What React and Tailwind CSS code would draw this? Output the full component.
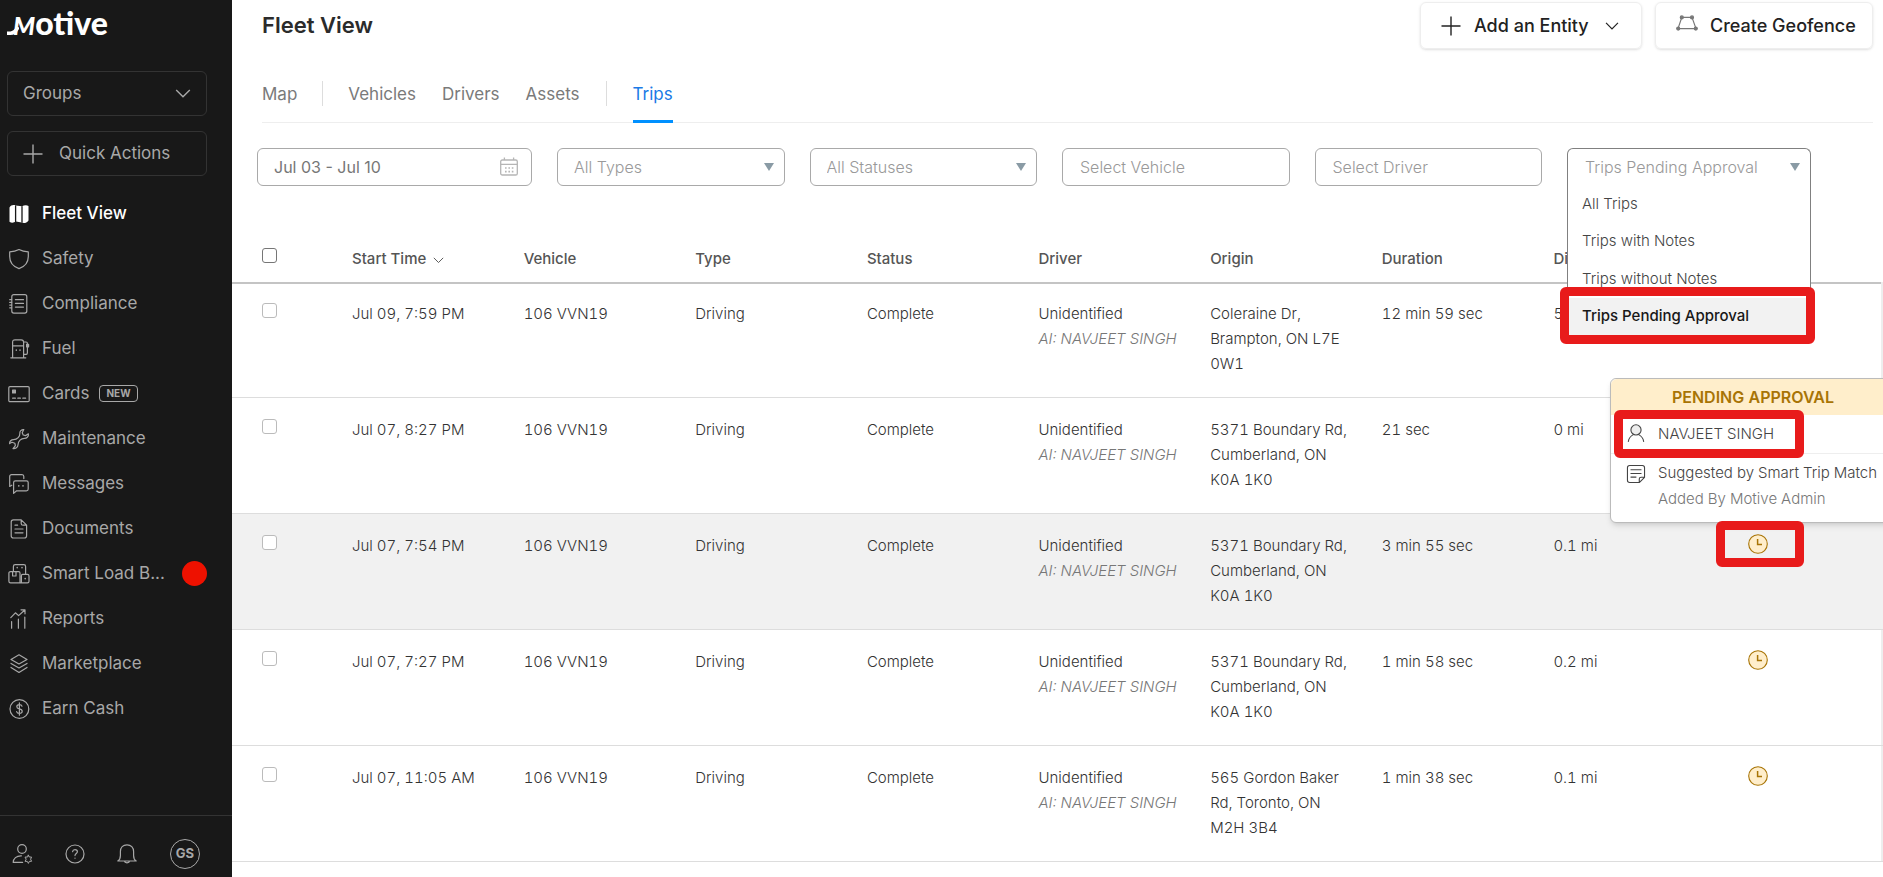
import React from 'react';
import clsx from 'clsx';

const Icon = ({ size = 22, children, className }) => (
  <svg
    width={size}
    height={size}
    viewBox="0 0 22 22"
    fill="none"
    stroke="currentColor"
    strokeWidth="1.2"
    strokeLinecap="round"
    strokeLinejoin="round"
    aria-hidden="true"
    className={clsx('shrink-0', className)}
  >
    {children}
  </svg>
);

const MapIcon = () => (
  <Icon>
    <path d="M1.5 4.5C3 2.2 5 1.6 7.6 2.4L14 3.2C16 2.2 18.6 1.6 20.5 3V17.5C18.6 20 16 20.6 13.6 19.6L8 18.6C5.6 20 3.4 20.2 1.5 18.8Z" fill="currentColor" stroke="none" />
    <path d="M7.6 3V18.4M14 3.6V19.2" stroke="#181818" strokeWidth="1.3" />
  </Icon>
);

const ShieldIcon = () => (
  <Icon>
    <path d="M11 1.6C13.8 3.2 17 3.8 20.3 3.8V8.5C20.3 14.5 16.8 18.6 11 20.6C5.2 18.6 1.7 14.5 1.7 8.5V3.8C5 3.8 8.2 3.2 11 1.6Z" />
  </Icon>
);

const ComplianceIcon = () => (
  <Icon>
    <rect x="3.8" y="1.7" width="15" height="18.4" rx="2" />
    <path d="M7.4 6.7H15.5M7.4 10.4H15.5M7.4 14.1H15.5M1.7 6.7H3.6M1.7 9.4H3.6M1.7 12.1H3.6M1.7 14.8H3.6" />
  </Icon>
);

const FuelIcon = () => (
  <Icon>
    <path d="M4.6 19.8V4.2C4.6 2.6 5.4 1.8 7 1.8H13.2C14.8 1.8 15.6 2.6 15.6 4.2V19.8M2.8 19.8H17.8M4.6 7.8H15.6" />
    <path d="M15.6 16.4H18.2C19.2 16.4 19.4 15.6 19.4 14.8V9.4M15.8 4H18C19 4 19.4 4.6 19.4 5.6V9.2" />
    <path d="M18.6 6.4H20.6V8.8H18.6Z" fill="currentColor" />
    <path d="M8.3 12V12.2M12 12V12.2" strokeWidth="1.5" />
  </Icon>
);

const CardsIcon = () => (
  <Icon>
    <rect x="0.8" y="3.6" width="20.4" height="15" rx="1.2" />
    <rect x="4.6" y="7.2" width="2.8" height="2.8" fill="currentColor" />
    <path d="M4.6 15.2H7.4M9.8 15.2H12.4M14.8 15.2H17.6" />
  </Icon>
);

const WrenchIcon = () => (
  <Icon>
    <path d="M15.8 1.6C13.4 1.4 11.6 3.2 11.8 5.6C12 7.6 11.4 8.4 10.2 9.6C8.8 11 7.6 11.6 5.6 11.6C3.2 11.6 1.4 13.4 1.6 15.6L4 14.2L6.8 15.2L7.4 17.6L5 20.6C7.4 21 10 19.4 10 16.8C10 14.6 10.6 13.6 12 12.2C13.4 10.8 14.4 10.4 16.4 10.4C18.8 10.4 20.8 8.4 20.4 5.8L17.8 7.6L15.2 7L14.2 4.8Z" />
  </Icon>
);

const MessagesIcon = () => (
  <Icon>
    <path d="M1.7 13.4V3.6C1.7 2.4 2.4 1.7 3.6 1.7H14C15.2 1.7 15.8 2.4 15.8 3.6V5.6M1.7 13.4L3.8 12.2" />
    <path d="M5.6 20.4V9.6C5.6 8.4 6.2 7.8 7.4 7.8H18.4C19.6 7.8 20.2 8.4 20.2 9.6V16C20.2 17.2 19.6 17.8 18.4 17.8H8.6Z" />
    <path d="M10.8 12.8V13M15 12.8V13" strokeWidth="1.6" />
  </Icon>
);

const DocumentIcon = () => (
  <Icon>
    <path d="M13.2 1.8H5.4C4 1.8 3.2 2.6 3.2 4V17.8C3.2 19.2 4 20 5.4 20H16.4C17.8 20 18.6 19.2 18.6 17.8V7.2ZM13.2 1.8V5.4C13.2 6.6 13.8 7.2 15 7.2H18.6" />
    <path d="M7 7.2H9.6M7 11H15M7 14.8H15" />
  </Icon>
);

const LoadIcon = () => (
  <Icon>
    <path d="M5.4 8.6V3.4C5.4 2.2 6 1.6 7.2 1.6H15.8C17 1.6 17.6 2.2 17.6 3.4V11.4M12 19.8V10C12 9 11.4 8.6 10.6 8.6H2.6C1.6 8.6 0.9 9 0.9 10V18.2C0.9 19.2 1.6 19.8 2.6 19.8H19.4C20.4 19.8 21 19.2 21 18.2V13C21 12 20.4 11.4 19.4 11.4H14.6C13.8 11.4 13.4 12 13.4 13V19.8M4.6 8.6V13H8V8.6" />
    <path d="M9.2 4.6V4.8M14 4.6V4.8M17.2 15.6V15.8" strokeWidth="1.5" />
  </Icon>
);

const ReportsIcon = () => (
  <Icon>
    <path d="M3.6 13.6V20.2M10.4 11.2V20.2M16.8 9V20.2M2.8 9.6L7.4 4.8L10.6 7.6L16.8 2M13 1.8H17V5.8" />
  </Icon>
);

const LayersIcon = () => (
  <Icon>
    <path d="M11 1.8L19 6.4L11 11L3 6.4ZM3 10.4L11 15L19 10.4M3 14.4L11 19.4L19 14.4" />
  </Icon>
);

const CashIcon = () => (
  <Icon>
    <circle cx="11.4" cy="11" r="9.4" />
    <path d="M14 8.2C13.6 7 12.6 6.6 11.4 6.6C9.8 6.6 8.8 7.4 8.8 8.7C8.8 10.1 9.8 10.5 11.4 10.9C13.2 11.3 14.2 11.9 14.2 13.3C14.2 14.7 13 15.4 11.4 15.4C10 15.4 8.9 14.8 8.6 13.6M11.4 4.8V17.2" />
  </Icon>
);

const ChevronDown = ({ width = 16, className }) => (
  <svg width={width} height={width / 2 + 1} viewBox="0 0 16 9" fill="none" stroke="currentColor" strokeWidth="1.4" aria-hidden="true" className={className}>
    <path d="M1.2 1L8 7.8L14.8 1" />
  </svg>
);

const PlusIcon = () => (
  <svg width="20" height="20" viewBox="0 0 20 20" stroke="currentColor" strokeWidth="1.4" aria-hidden="true">
    <path d="M10 0.5V19.5M0.5 10H19.5" />
  </svg>
);

const Triangle = () => (
  <svg width="10" height="8" viewBox="0 0 10 8" aria-hidden="true" className="pointer-events-none absolute right-[11px] top-[15px]">
    <path d="M0 0H10L5 8Z" fill="#8a9ba5" />
  </svg>
);

const ClockIcon = () => (
  <svg width="20" height="20" viewBox="0 0 20 20" aria-hidden="true">
    <circle cx="10" cy="10" r="9.3" fill="#ffeecb" stroke="#a87405" strokeWidth="1.1" />
    <path d="M9.6 5V10.4H14" fill="none" stroke="#a87405" strokeWidth="1.5" />
  </svg>
);

const navItems = [
  { label: 'Fleet View', icon: MapIcon, active: true },
  { label: 'Safety', icon: ShieldIcon },
  { label: 'Compliance', icon: ComplianceIcon },
  { label: 'Fuel', icon: FuelIcon },
  { label: 'Cards', icon: CardsIcon, tag: 'NEW' },
  { label: 'Maintenance', icon: WrenchIcon },
  { label: 'Messages', icon: MessagesIcon },
  { label: 'Documents', icon: DocumentIcon },
  { label: 'Smart Load B...', icon: LoadIcon, dot: true },
  { label: 'Reports', icon: ReportsIcon },
  { label: 'Marketplace', icon: LayersIcon },
  { label: 'Earn Cash', icon: CashIcon },
];

const trips = [
  { start: 'Jul 09, 7:59 PM', origin: ['Coleraine Dr,', 'Brampton, ON L7E', '0W1'], duration: '12 min 59 sec', distance: '5' },
  { start: 'Jul 07, 8:27 PM', origin: ['5371 Boundary Rd,', 'Cumberland, ON', 'K0A 1K0'], duration: '21 sec', distance: '0 mi' },
  { start: 'Jul 07, 7:54 PM', origin: ['5371 Boundary Rd,', 'Cumberland, ON', 'K0A 1K0'], duration: '3 min 55 sec', distance: '0.1 mi', pending: true, open: true },
  { start: 'Jul 07, 7:27 PM', origin: ['5371 Boundary Rd,', 'Cumberland, ON', 'K0A 1K0'], duration: '1 min 58 sec', distance: '0.2 mi', pending: true },
  { start: 'Jul 07, 11:05 AM', origin: ['565 Gordon Baker', 'Rd, Toronto, ON', 'M2H 3B4'], duration: '1 min 38 sec', distance: '0.1 mi', pending: true },
];

const Sidebar = () => (
  <aside className="w-[232px] shrink-0 bg-[#181818] text-[#a8a8a8] flex flex-col">
    <div className="flex items-baseline pt-[3px] pl-[7px] h-[71px] font-[Lato] font-black text-white">
      <svg width="12" height="8" viewBox="0 0 12 8" aria-hidden="true" className="-mr-[6px]">
        <path d="M0 6.2H3.4C6.6 6.2 8.6 4.6 11 0" fill="none" stroke="#fff" strokeWidth="3.6" />
      </svg>
      <span className="text-[25px] leading-[40px] italic">M</span>
      <span className="text-[32px] leading-[40px]">otive</span>
    </div>

    <div className="pl-[7px] pr-[25px] space-y-[15px]">
      <button type="button" className="w-full h-[45px] px-[15px] flex items-center justify-between border border-[#333] rounded-md text-[17px]">
        Groups
        <ChevronDown />
      </button>
      <button type="button" className="w-full h-[45px] px-[15px] flex items-center gap-4 border border-[#333] rounded-md text-[17px]">
        <PlusIcon />
        Quick Actions
      </button>
    </div>

    <nav className="flex-1 pt-[15px] pl-2 pr-[25px]">
      {navItems.map(({ label, icon: NavIcon, active, tag, dot }) => (
        <a key={label} href="#" className={clsx('h-[45px] flex items-center text-[17px]', active && 'text-white font-medium')}>
          <NavIcon />
          <span className="ml-3">{label}</span>
          {tag && <span className="ml-[10px] px-[6px] border border-[#a8a8a8] rounded-sm text-[10px] leading-[15px] font-bold">{tag}</span>}
          {dot && <span className="ml-auto size-[25px] rounded-full bg-[#ee1100]"></span>}
        </a>
      ))}
    </nav>

    <div className="h-[62px] pt-[14px] px-3 flex items-center gap-[30px] border-t border-[#333]">
      <button type="button" aria-label="Admin">
        <Icon>
          <circle cx="10" cy="6" r="4.3" />
          <path d="M10.6 19.4H1.2C1.2 15.6 4.4 12.6 9.4 12.8" />
          <path d="M16.4 12.2L17.3 14L19.6 14.1L18.6 16.2L19.6 18.3L17.3 18.4L16.4 20.4L15.3 18.4L13 18.3L14.2 16.2L13 14.1L15.3 14Z" strokeWidth="1" />
        </Icon>
      </button>
      <button type="button" aria-label="Help">
        <Icon>
          <circle cx="11" cy="11" r="9" />
          <path d="M8.6 8.6C8.8 7.2 9.8 6.6 11 6.6C12.4 6.6 13.4 7.4 13.4 8.7C13.4 10.4 11 10.6 11 12.6M11 15V15.2" />
        </Icon>
      </button>
      <button type="button" aria-label="Notifications">
        <Icon>
          <path d="M1.8 18H20.2C18 16.6 17.6 15 17.6 12.4V8.6C17.6 4.6 15 1.8 11 1.8C7 1.8 4.4 4.6 4.4 8.6V12.4C4.4 15 4 16.6 1.8 18ZM8.4 18.2C8.8 20.4 13.2 20.4 13.6 18.2" />
        </Icon>
      </button>
      <button type="button" className="ml-[2px] size-[30px] rounded-full border border-[#a8a8a8] text-[13px] font-bold">GS</button>
    </div>
  </aside>
);

const FilterSelect = ({ label }) => (
  <div className="relative flex-1 min-w-0">
    <select aria-label={label} className="w-full h-[38px] pl-4 appearance-none border border-[#a9a9a9] rounded-md bg-white text-base font-light text-[#999]">
      <option>{label}</option>
    </select>
    <Triangle />
  </div>
);

const FilterInput = ({ label }) => (
  <div className="flex-1 min-w-0">
    <input
      type="text"
      aria-label={label}
      placeholder={label}
      className="w-full h-[38px] px-[17px] border border-[#a9a9a9] rounded-md text-base font-light placeholder:text-[#999]"
    />
  </div>
);

const NotesFilter = () => (
  <div className="relative z-20 w-[244px] shrink-0">
    <select aria-label="Notes" className="w-full h-[38px] pl-[17px] pb-px appearance-none border border-b-0 border-[#808080] rounded-t-md bg-white text-base font-light text-[#999]">
      <option>Trips Pending Approval</option>
    </select>
    <Triangle />
    <ul className="absolute top-[37px] left-0 w-full border border-t-0 border-[#808080] bg-white text-[15px] font-light text-[#444]">
      <li className="h-[38px] px-[14px] flex items-center">All Trips</li>
      <li className="h-[37px] px-[14px] flex items-center">Trips with Notes</li>
      <li className="h-[38px] px-[14px] flex items-center">Trips without Notes</li>
      <li className="h-[37px] px-[14px] flex items-center bg-[#f2f2f2] text-[#181818] font-medium">Trips Pending Approval</li>
    </ul>
    <span className="pointer-events-none absolute -left-[7px] top-[139px] w-[255px] h-[57px] border-[9px] border-[#e81b1b] rounded-md"></span>
  </div>
);

const PendingCard = () => (
  <div role="tooltip" className="absolute z-10 left-[-138px] bottom-[31px] w-[286px] bg-white border border-[#bbb] rounded-md shadow-md text-[15px] text-[#444]">
    <div className="h-9 flex items-center justify-center bg-[#ffeecb] rounded-t-md text-[#a87405] text-base font-semibold">PENDING APPROVAL</div>
    <div className="h-[39px] pl-[15px] pb-[2px] flex items-center gap-3 border-b border-[#eee]">
      <Icon size={20}>
        <circle cx="11" cy="7.6" r="5.6" fill="#eee" />
        <path d="M2.6 20.4C3 16.8 4.8 14.6 8 12.8M19.4 20.4C19 16.8 17.2 14.6 14 12.8" />
      </Icon>
      NAVJEET SINGH
    </div>
    <div className="h-[68px] pt-[6px] pl-[15px] flex gap-3 leading-[26px] whitespace-nowrap">
      <Icon size={20} className="mt-1">
        <path d="M14.6 20.4H4C2.4 20.4 1.6 19.6 1.6 18V4C1.6 2.4 2.4 1.6 4 1.6H18C19.6 1.6 20.4 2.4 20.4 4V14.6ZM14.6 20.4V16.6C14.6 15.2 15.2 14.6 16.6 14.6H20.4M5.4 6.4H16.6M5.4 10.4H16.6M5.4 14.4H11" />
      </Icon>
      <div>
        <p>Suggested by Smart Trip Match</p>
        <p className="text-[#777]">Added By Motive Admin</p>
      </div>
    </div>
    <span className="pointer-events-none absolute left-[3px] top-[31px] w-[190px] h-[48px] border-[9px] border-[#e81b1b] rounded-md"></span>
  </div>
);

const Checkbox = ({ label, className }) => (
  <input type="checkbox" aria-label={label} className={clsx('block size-[15px] appearance-none border rounded-[3px] bg-white', className)} />
);

const TripRow = ({ trip }) => (
  <tr className={clsx('border-b border-[#ddd] align-top', trip.open && 'bg-[#f1f1f1]')}>
    <td className="pl-[30px] pt-[21px]"><Checkbox label={`Select trip ${trip.start}`} className="border-[#bbb]" /></td>
    <td className="pl-5 pt-[19px] pb-[21px]">{trip.start}</td>
    <td className="pl-5 pt-[19px]">106 VVN19</td>
    <td className="pl-5 pt-[19px]">Driving</td>
    <td className="pl-5 pt-[19px]">Complete</td>
    <td className="pl-5 pt-[19px] whitespace-nowrap">
      <p>Unidentified</p>
      <p className="italic text-[#777]">AI: NAVJEET SINGH</p>
    </td>
    <td className="pl-5 pt-[19px] pb-[21px] whitespace-nowrap">
      {trip.origin.map(line => <p key={line}>{line}</p>)}
    </td>
    <td className="pl-5 pt-[19px]">{trip.duration}</td>
    <td className="pl-5 pt-[19px]">{trip.distance}</td>
    <td className="pl-[43px] pt-5">
      {trip.pending && (
        <div className="relative size-5">
          <button type="button" aria-label="Pending approval" className="block"><ClockIcon /></button>
          {trip.open && <PendingCard />}
          {trip.open && <span className="pointer-events-none absolute z-20 -left-8 -top-[13px] w-[88px] h-[46px] border-[9px] border-[#e81b1b] rounded-md"></span>}
        </div>
      )}
    </td>
  </tr>
);

const App = () => {
  return (
    <div className="flex h-screen overflow-hidden bg-white font-[Inter,sans-serif]">
      <Sidebar />

      <main className="flex-1 min-w-0">
        <header className="h-[49px] pt-[2px] pl-[30px] pr-[10px] flex items-center">
          <h1 className="text-[22px] font-semibold text-[#2b2b2b]">Fleet View</h1>
          <div className="ml-auto flex gap-[13px]">
            <button type="button" className="h-[47px] w-[222px] pl-5 flex items-center border border-[#eee] rounded-md shadow-sm text-lg font-medium text-[#222]">
              <PlusIcon />
              <span className="ml-[13px] mr-4">Add an Entity</span>
              <ChevronDown width={14} />
            </button>
            <button type="button" className="h-[47px] w-[218px] pl-5 flex items-center gap-3 border border-[#eee] rounded-md shadow-sm text-lg font-medium text-[#222] whitespace-nowrap">
              <Icon className="mb-1 text-[#777]">
                <path d="M5.8 4.4H16L20 15.6H2Z" />
                <g fill="currentColor">
                  <circle cx="5.8" cy="4.4" r="1.5" />
                  <circle cx="16" cy="4.4" r="1.5" />
                  <circle cx="19.8" cy="15.6" r="1.5" />
                  <circle cx="2.2" cy="15.6" r="1.5" />
                </g>
              </Icon>
              Create Geofence
            </button>
          </div>
        </header>

        <nav className="mt-4 ml-[30px] mr-[10px] h-[58px] flex items-stretch border-b border-[#eee] text-[17px] text-[#7a7a7a]">
          <a href="#" className="pt-[2px] flex items-center">Map</a>
          <span className="mx-[25px] my-4 w-px bg-[#ddd]"></span>
          <a href="#" className="pt-[2px] flex items-center">Vehicles</a>
          <a href="#" className="ml-[26px] pt-[2px] flex items-center">Drivers</a>
          <a href="#" className="ml-[26px] pt-[2px] flex items-center">Assets</a>
          <span className="mx-[26px] my-4 w-px bg-[#ddd]"></span>
          <a href="#" className="-mb-px pt-[4px] flex items-center border-b-3 border-[#0090ff] text-[#1a7ae6]">Trips</a>
        </nav>

        <div className="pt-[25px] pl-[25px] pr-[72px] flex gap-[25px]">
          <div className="relative w-[275px] shrink-0">
            <input type="text" aria-label="Date range" defaultValue="Jul 03 - Jul 10" className="w-full h-[38px] pl-4 border border-[#a9a9a9] rounded-md text-base text-[#777]" />
            <svg width="18" height="19" viewBox="0 0 18 19" fill="none" stroke="#b5b5b5" strokeWidth="1.3" aria-hidden="true" className="pointer-events-none absolute right-[14px] top-[9px]">
              <rect x="0.7" y="3" width="16.6" height="15" rx="1.6" />
              <path d="M0.7 7.4H17.3M4.4 0.4V3M13.6 0.4V3" />
              <path d="M5 11H13.4M5 14.6H13.4" strokeDasharray="1.6 1.8" strokeWidth="1.6" />
            </svg>
          </div>
          <FilterSelect label="All Types" />
          <FilterSelect label="All Statuses" />
          <FilterInput label="Select Vehicle" />
          <FilterInput label="Select Driver" />
          <NotesFilter />
        </div>

        <table className="w-full table-fixed text-[15px] leading-[25px] text-[#555] tabular-nums">
          <colgroup>
            <col className="w-[100px]" />
            <col span="8" />
            <col className="w-[178px]" />
          </colgroup>
          <thead>
            <tr className="h-[96px] text-left align-top shadow-[0_2px_0_#c4c4c4]">
              <th className="pl-[30px] pt-[62px]"><Checkbox label="Select all trips" className="border-[#767676]" /></th>
              <th className="pl-5 pt-[60px] font-medium">
                <span className="flex items-center gap-[7px]">Start Time <ChevronDown width={11} className="mt-1" /></span>
              </th>
              <th className="pl-5 pt-[60px] font-medium">Vehicle</th>
              <th className="pl-5 pt-[60px] font-medium">Type</th>
              <th className="pl-5 pt-[60px] font-medium">Status</th>
              <th className="pl-5 pt-[60px] font-medium">Driver</th>
              <th className="pl-5 pt-[60px] font-medium">Origin</th>
              <th className="pl-5 pt-[60px] font-medium">Duration</th>
              <th className="pl-5 pt-[60px] font-medium">Distance</th>
              <th></th>
            </tr>
          </thead>
          <tbody className="font-light text-[#333] shadow-[inset_-2px_0_0_#eee]">
            {trips.map(trip => <TripRow key={trip.start} trip={trip} />)}
          </tbody>
        </table>
      </main>
    </div>
  );
};

export default App;
